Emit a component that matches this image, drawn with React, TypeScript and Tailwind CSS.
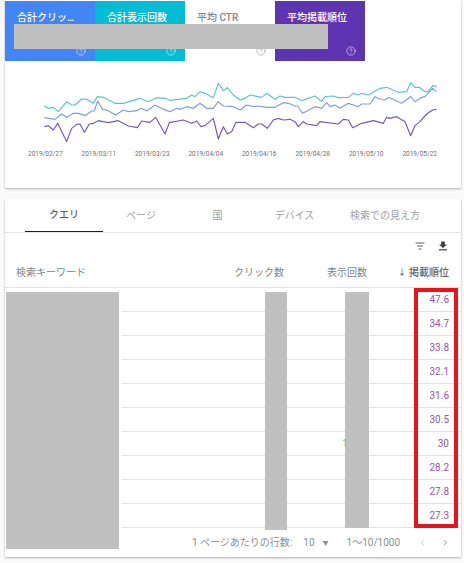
import { CircleHelp, ChevronLeft, ChevronRight } from "lucide-react";

const FONT = { fontFamily: '"Roboto","Noto Sans CJK JP",sans-serif' };

const teal = "133,318 145,325 160,322 175,335 200,305 215,315 225,315 245,297 260,298 280,310 292,290 310,292 345,310 370,310 410,298 420,295 445,305 470,293 495,295 510,301 560,295 575,285 585,290 600,275 615,280 640,293 655,250 670,272 682,263 700,285 720,300 735,295 750,285 785,292 800,280 825,298 840,288 855,292 885,292 905,302 945,288 965,305 975,290 1000,288 1015,293 1045,292 1060,280 1075,285 1085,280 1105,285 1140,265 1160,262 1195,277 1220,275 1232,248 1245,262 1258,262 1275,275 1285,275 1298,257 1310,260";
const blue = "133,353 165,358 185,342 200,352 220,340 235,340 255,347 275,333 283,333 293,303 308,328 320,330 347,345 370,330 385,335 410,332 425,325 440,333 465,315 490,328 510,335 530,325 540,328 560,320 580,325 600,310 620,325 640,325 655,305 670,318 700,320 720,330 740,315 760,320 775,318 800,322 825,322 850,308 865,310 885,318 893,318 908,340 945,320 965,325 980,308 990,320 1005,315 1020,325 1045,310 1060,315 1075,320 1085,312 1110,312 1125,290 1140,297 1155,300 1165,292 1205,310 1232,290 1245,305 1265,292 1275,290 1298,265 1310,275";
const purple = "133,380 145,377 160,390 173,370 200,425 215,385 230,373 240,372 253,397 268,372 280,370 295,362 325,368 355,362 385,378 412,383 425,363 450,367 467,352 495,402 508,368 550,360 575,370 590,363 603,380 615,377 640,355 655,417 670,380 682,402 695,395 708,367 735,367 760,383 775,372 785,372 802,385 820,360 835,355 850,360 870,358 885,365 895,380 910,365 920,372 950,377 960,365 1015,372 1030,358 1045,360 1058,383 1085,370 1120,362 1150,370 1160,352 1170,355 1190,350 1215,365 1232,407 1245,377 1260,365 1280,342 1298,330 1310,328";

const dates = ["2019/02/27", "2019/03/11", "2019/03/23", "2019/04/04", "2019/04/16", "2019/04/28", "2019/05/10", "2019/05/22"];
const values = ["47.6", "34.7", "33.8", "32.1", "31.6", "30.5", "30", "28.2", "27.8", "27.3"];

function Tile({ label, bg, text, help }: { label: string; bg: string; text: string; help: string }) {
  return (
    <div className={`w-[90px] h-[60px] pl-3 pr-2 pt-[10px] pb-[5px] flex flex-col justify-between ${bg} ${text}`}>
      <div className="text-[10px] leading-[14px] font-medium whitespace-nowrap">{label}</div>
      <div className="flex justify-end pr-[1px]">
        <CircleHelp size={10} strokeWidth={1.6} className={help} />
      </div>
    </div>
  );
}

export default function App() {
  return (
    <div className="w-[464px] h-[563px] overflow-hidden bg-[#fafafa] pl-[5px] text-[#80868b]" style={FONT}>
      {/* Performance card */}
      <div className="relative w-[456px] h-[188px] bg-white pt-px shadow-[0_1px_2px_rgba(0,0,0,0.3)]">
        <div className="flex">
          <Tile label="合計クリッ…" bg="bg-[#4285f4]" text="text-white" help="text-white/80" />
          <Tile label="合計表示回数" bg="bg-[#00bcd4]" text="text-white" help="text-white/80" />
          <Tile label="平均 CTR" bg="bg-white" text="text-[#80868b]" help="text-[#9aa0a6]" />
          <Tile label="平均掲載順位" bg="bg-[#5e35b1]" text="text-white" help="text-white/80" />
        </div>
        <div className="absolute left-[9px] top-[24px] w-[314px] h-[25px] bg-[#c0c0c0]" />
        <svg viewBox="15 183 1368 261" className="block w-[456px] h-[87px]" fill="none" strokeWidth="3.5" strokeLinejoin="round">
          <polyline points={teal} stroke="#5cc4c8" />
          <polyline points={blue} stroke="#7d9fdb" />
          <polyline points={purple} stroke="#7459b8" />
        </svg>
        <div className="flex justify-between pl-[23px] pr-[24px] text-[6.5px] leading-[12px] text-[#6f6f6f]">
          {dates.map((d) => (
            <span key={d}>{d}</span>
          ))}
        </div>
      </div>

      {/* Table card */}
      <div className="relative w-[456px] h-[358px] mt-[11px] bg-white shadow-[0_1px_2px_rgba(0,0,0,0.3)] text-[10px]">
        <div className="relative h-[34px] border-b border-[#e0e0e0] text-[#9aa0a6]">
          <div className="grid grid-cols-[20px_78px_76px_77px_77px_104px] h-full items-center text-center leading-none">
            <span />
            <span className="h-full flex items-center justify-center border-b border-[#202124] text-[#5f6368] font-medium">クエリ</span>
            <span>ページ</span>
            <span>国</span>
            <span>デバイス</span>
            <span className="whitespace-nowrap">検索での見え方</span>
          </div>
        </div>
        <div className="h-[25px] flex items-center justify-end gap-[13px] pr-[13px]">
          <svg width="10" height="8" viewBox="0 0 10 8" fill="none" stroke="#5f6368" strokeWidth="1">
            <path d="M0.5 1H9.5M2 4H8M3.5 7H6.5" />
          </svg>
          <svg width="10" height="10" viewBox="0 0 10 10" fill="#3c4043">
            <path d="M3.2 0.5H6.8V3.5H9L5 7L1 3.5H3.2Z" />
            <rect x="1" y="8.2" width="8" height="1.2" />
          </svg>
        </div>
        <div className="h-[30px] border-b border-[#e0e0e0] grid grid-cols-[184px_84px_83px_82px] items-center pl-[11px] text-[#80868b] leading-none whitespace-nowrap">
          <span>検索キーワード</span>
          <span className="text-right">クリック数</span>
          <span className="text-right">表示回数</span>
          <span className="flex items-center justify-end gap-[3px] text-[#5f6368] font-medium">
            <span className="text-[8px]">↓</span>
            掲載順位
          </span>
        </div>
        <div className="ml-[117px]">
          {values.map((v, i) => (
            <div key={v} className="relative h-[24px] border-b border-[#e0e0e0] flex items-center justify-end pr-[12px] text-[#9c4fb0] leading-none">
              {i === 6 && <span className="absolute z-10 left-[220px] text-[#5cc8c0]">1</span>}
              {v}
            </div>
          ))}
        </div>
        <div className="h-[29px] relative flex items-center justify-end pr-[11px] text-[#8a8f94] leading-none whitespace-nowrap">
          <span>1 ページあたりの行数:</span>
          <span className="ml-[11px]">10</span>
          <span className="ml-[8px] text-[6px]">▼</span>
          <span className="ml-[18px]">1〜10/1000</span>
          <ChevronLeft size={9} className="ml-[18px] text-[#b5b5b5]" />
          <ChevronRight size={9} className="ml-[14px] text-[#707070]" />
        </div>

        {/* Redaction blocks */}
        <div className="absolute left-px top-[93px] w-[113px] h-[257px] bg-[#c0c0c0]" />
        <div className="absolute left-[260px] top-[93px] w-[22px] h-[238px] bg-[#c0c0c0]" />
        <div className="absolute left-[340px] top-[93px] w-[24px] h-[236px] bg-[#c0c0c0]" />
        {/* Highlight frame */}
        <div className="absolute left-[409px] top-[89px] w-[44px] h-[240px] border-4 border-[#e8141c]" />
      </div>
    </div>
  );
}
